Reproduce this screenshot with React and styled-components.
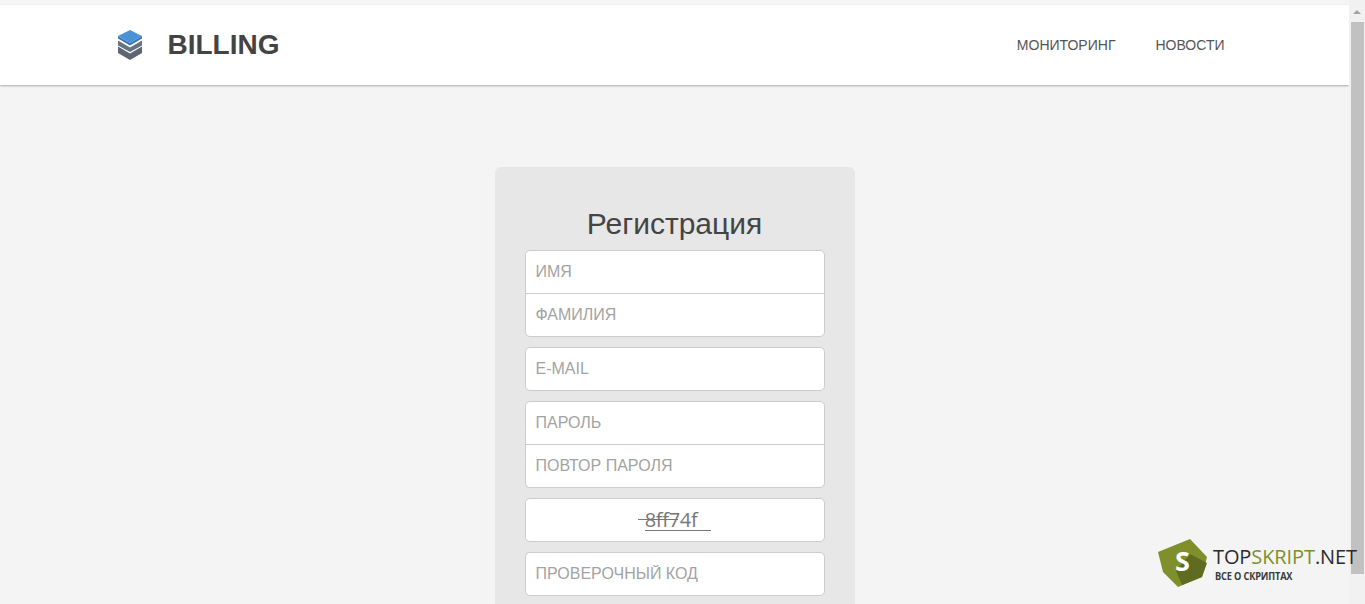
import React from 'react';
import styled, { createGlobalStyle } from 'styled-components';

const GlobalStyle = createGlobalStyle`
  html, body {
    margin: 0;
    padding: 0;
    height: 604px;
    overflow: hidden;
    background: #f4f4f4;
    font-family: 'Liberation Sans', Arial, sans-serif;
  }
  * {
    box-sizing: border-box;
  }
`;

function StackIcon() {
  return (
    <svg width="24" height="30" viewBox="0 0 24 30">
      <path d="M0 16.5 12 23.5 24 16.5V23L12 30 0 23z" fill="#5c6674" />
      <path d="M0 10.5 12 17.5 24 10.5V15.5L12 22 0 15.5z" fill="#687281" />
      <path d="M0 6V8.5L12 15.5 24 8.5V6L12 13z" fill="#3a77b5" />
      <path d="M12 0 24 6 12 13 0 6z" fill="#4a92d6" />
    </svg>
  );
}

function HexLogo() {
  return (
    <svg width="50" height="50" viewBox="0 0 50 50">
      <path d="M32 0 49 18 44 38 20 48 5 33 0 13z" fill="#7f8f2c" />
      <path d="M18 32 32 15 49 24 44 38 24 46z" fill="#5e6b20" />
      <text x="24.5" y="32" textAnchor="middle" fontFamily="'Open Sans', sans-serif" fontWeight="700" fontSize="27" fill="#fff">S</text>
    </svg>
  );
}

export default function App() {
  return (
    <>
      <GlobalStyle />
      <Page>
        <Main>
          <Header>
            <Brand>
              <StackIcon />
              <BrandName>BILLING</BrandName>
            </Brand>
            <Nav>
              <NavLink href="#">Мониторинг</NavLink>
              <NavLink href="#">Новости</NavLink>
            </Nav>
          </Header>
          <Card>
            <Title>Регистрация</Title>
            <Group>
              <Field placeholder="ИМЯ" />
              <Field placeholder="ФАМИЛИЯ" />
            </Group>
            <Group>
              <Field placeholder="E-MAIL" />
            </Group>
            <Group>
              <Field type="password" placeholder="ПАРОЛЬ" />
              <Field type="password" placeholder="ПОВТОР ПАРОЛЯ" />
            </Group>
            <Captcha>
              <CaptchaText>8ff74f</CaptchaText>
            </Captcha>
            <Group>
              <Field placeholder="ПРОВЕРОЧНЫЙ КОД" />
            </Group>
          </Card>
        </Main>
        <Scrollbar>
          <ScrollArrow />
          <ScrollThumb />
        </Scrollbar>
        <Watermark>
          <HexLogo />
          <WatermarkText>
            <WatermarkName>
              TOP<em>SKRIPT</em>.NET
            </WatermarkName>
            <WatermarkSub>ВСЕ О СКРИПТАХ</WatermarkSub>
          </WatermarkText>
        </Watermark>
      </Page>
    </>
  );
}

const Page = styled.div`
  position: relative;
  display: flex;
  width: 1365px;
  height: 604px;
  overflow: hidden;
  background: #f4f4f4;
`;

const Main = styled.main`
  flex: 1;
  display: flex;
  flex-direction: column;
  align-items: center;
  padding-top: 5px;
  min-width: 0;
`;

const Header = styled.header`
  display: flex;
  align-items: center;
  justify-content: space-between;
  flex: none;
  width: 100%;
  height: 80px;
  padding: 0 124.5px 0 118px;
  background: #fff;
  box-shadow: 0 1px 2px rgba(0, 0, 0, 0.3);
`;

const Brand = styled.div`
  display: flex;
  align-items: center;
  gap: 25.5px;
`;

const BrandName = styled.span`
  font-size: 28px;
  font-weight: 700;
  color: #444;
`;

const Nav = styled.nav`
  display: flex;
  gap: 40px;
`;

const NavLink = styled.a`
  font-size: 14px;
  text-transform: uppercase;
  text-decoration: none;
  color: #555;
`;

const Card = styled.section`
  display: flex;
  flex-direction: column;
  gap: 10px;
  flex: none;
  width: 360px;
  margin-top: 82px;
  padding: 38px 30px 30px;
  background: #e7e7e7;
  border-radius: 6px;
`;

const Title = styled.h1`
  margin: 0 0 -4px;
  height: 39px;
  font-size: 30px;
  line-height: 37px;
  font-weight: 400;
  text-align: center;
  color: #444;
`;

const Group = styled.div`
  display: flex;
  flex-direction: column;
  background: #fff;
  border: 1px solid #ccc;
  border-radius: 5px;
`;

const Field = styled.input`
  display: block;
  width: 100%;
  height: 42px;
  padding: 0 10px;
  border: 0;
  outline: 0;
  background: transparent;
  font-family: inherit;
  font-size: 16px;
  color: #555;
  & + & {
    height: 43px;
    border-top: 1px solid #ccc;
  }
  &::placeholder {
    color: #a3a3a3;
    opacity: 1;
  }
`;

const Captcha = styled(Group)`
  align-items: center;
  justify-content: center;
  height: 44px;
`;

const CaptchaText = styled.span`
  position: relative;
  margin-right: 7px;
  font-family: 'Open Sans', sans-serif;
  font-size: 20px;
  line-height: 28px;
  letter-spacing: -0.3px;
  color: #777;
  &::before {
    content: '';
    position: absolute;
    left: -7px;
    top: 13px;
    width: 40px;
    height: 1px;
    background: #777;
  }
  &::after {
    content: '';
    position: absolute;
    left: 0;
    top: 24px;
    width: 66px;
    height: 1px;
    background: #777;
  }
`;

const Scrollbar = styled.aside`
  display: flex;
  flex-direction: column;
  align-items: center;
  flex: none;
  width: 16px;
  padding-top: 10px;
  background: #f1f1f1;
`;

const ScrollArrow = styled.div`
  flex: none;
  width: 0;
  height: 0;
  border-left: 4px solid transparent;
  border-right: 4px solid transparent;
  border-bottom: 4px solid #a3a3a3;
`;

const ScrollThumb = styled.div`
  width: 13px;
  height: 552px;
  margin-top: 8px;
  margin-left: 1px;
  background: #c1c1c1;
`;

const Watermark = styled.div`
  position: absolute;
  left: 1158px;
  top: 539px;
  display: flex;
  gap: 5px;
`;

const WatermarkText = styled.div`
  display: flex;
  flex-direction: column;
  padding-top: 5px;
`;

const WatermarkName = styled.div`
  font-family: 'Open Sans', sans-serif;
  font-size: 20px;
  line-height: 26px;
  letter-spacing: -0.1px;
  color: #2b2b2b;
  white-space: nowrap;
  em {
    font-style: normal;
    color: #7f8f2c;
  }
`;

const WatermarkSub = styled.div`
  margin-left: 2px;
  font-family: 'Open Sans', sans-serif;
  font-size: 11px;
  font-weight: 700;
  line-height: 11px;
  letter-spacing: -0.2px;
  color: #3a3a3a;
  white-space: nowrap;
  transform: scaleX(0.84);
  transform-origin: left center;
`;
